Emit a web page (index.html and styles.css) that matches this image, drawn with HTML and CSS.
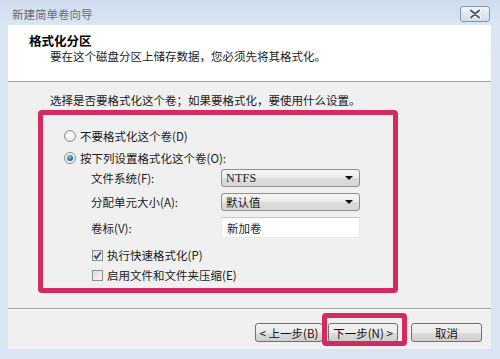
FILE: index.html
```html
<!DOCTYPE html>
<html lang="zh-CN">
<head>
    <meta charset="UTF-8">
    <meta name="viewport" content="width=device-width, initial-scale=1.0">
    <title>新建简单卷向导</title>
    <link rel="stylesheet" href="styles.css">
</head>
<body>
    <div class="window">
        <div class="titlebar">
            <span class="caption">新建简单卷向导</span>
            <span class="close-btn">
                <svg width="14" height="10" viewBox="0 0 14 10">
                    <path d="M3 1.5 L11 8.5 M11 1.5 L3 8.5" stroke="#ffffff" stroke-width="4" stroke-linecap="round"/>
                    <path d="M3 1.5 L11 8.5 M11 1.5 L3 8.5" stroke="#4f5a68" stroke-width="2" stroke-linecap="round"/>
                </svg>
            </span>
        </div>

        <div class="page">
            <div class="header">
                <div class="header-title">格式化分区</div>
                <div class="header-sub">要在这个磁盘分区上储存数据，您必须先将其格式化。</div>
            </div>

            <div class="content">
                <p class="intro">选择是否要格式化这个卷；如果要格式化，要使用什么设置。</p>

                <div class="mark-box">
                    <div class="option"><span class="radio"></span>不要格式化这个卷(D)</div>
                    <div class="option"><span class="radio checked"></span>按下列设置格式化这个卷(O):</div>

                    <div class="fields">
                        <label>文件系统(F):</label>
                        <div class="combo"><span class="latin">NTFS</span><span class="arrow"></span></div>
                        <label>分配单元大小(A):</label>
                        <div class="combo">默认值<span class="arrow"></span></div>
                        <label>卷标(V):</label>
                        <div class="textbox">新加卷</div>
                    </div>

                    <div class="check-row">
                        <span class="checkbox">
                            <svg width="9" height="9" viewBox="0 0 9 9">
                                <path d="M1.2 4.6 L3.5 7.2 L7.8 1.2" fill="none" stroke="#2b4f8f" stroke-width="1.8"/>
                            </svg>
                        </span>执行快速格式化(P)
                    </div>
                    <div class="check-row"><span class="checkbox"></span>启用文件和文件夹压缩(E)</div>
                </div>
            </div>

            <div class="buttons">
                <button class="btn">&lt; 上一步(B)</button>
                <span class="next-wrap">
                    <button class="btn next">下一步(N) &gt;</button>
                    <span class="mark-ring"></span>
                </span>
                <button class="btn cancel">取消</button>
            </div>
        </div>
    </div>
</body>
</html>
```

FILE: styles.css
```css
body {
    margin: 0;
    width: 500px;
    height: 359px;
    overflow: hidden;
    font-family: "Noto Sans CJK SC", "Liberation Sans", sans-serif;
    font-size: 11.5px;
    color: #1a1a1a;
    background: linear-gradient(#cfdcee 0, #dbe6f3 26px, #dae5f3 100%);
}
.window {
    height: 359px;
    display: flex;
    flex-direction: column;
}
.titlebar {
    height: 25px;
    padding: 0 10px 0 12px;
    display: flex;
    align-items: center;
    justify-content: space-between;
    box-sizing: border-box;
}
.caption {
    color: #666d76;
    line-height: 14px;
    margin-top: 3px;
}
.close-btn {
    width: 30px;
    height: 16px;
    margin-top: 3px;
    box-sizing: border-box;
    border: 1px solid #8596ad;
    border-radius: 3px;
    background: linear-gradient(#f3f6fa, #dfe7f1 50%, #d3deeb);
    display: flex;
    align-items: center;
    justify-content: center;
}
.page {
    margin: 0 9px 0 8px;
    background: #f0f0f0;
}
.header {
    height: 57px;
    box-sizing: border-box;
    padding: 9px 0 0 21px;
    background: #fff;
    border-bottom: 1px solid #a0a0a0;
}
.header-title {
    font-weight: bold;
    font-size: 12.5px;
    line-height: 14px;
    color: #000;
}
.header-sub {
    margin-top: 1px;
    padding-left: 21px;
    line-height: 14px;
}
.content {
    height: 227px;
    box-sizing: border-box;
    padding-top: 11px;
    border-bottom: 1px solid #a0a0a0;
}
.intro {
    margin: 0 0 3px 42px;
    line-height: 14px;
}
.mark-box {
    margin-left: 30px;
    width: 360px;
    height: 183px;
    box-sizing: border-box;
    border: 5px solid #d42a62;
    border-radius: 4px;
    padding-top: 10px;
}
.option {
    height: 22px;
    padding-left: 21px;
    display: flex;
    align-items: center;
}
.radio {
    width: 12px;
    height: 12px;
    box-sizing: border-box;
    border: 1px solid #8e8f8f;
    border-radius: 50%;
    background: radial-gradient(circle at 50% 40%, #ffffff, #e2e2e2);
    margin-right: 4px;
    display: flex;
    align-items: center;
    justify-content: center;
}
.radio.checked::after {
    content: "";
    width: 6px;
    height: 6px;
    border-radius: 50%;
    background: radial-gradient(circle at 40% 35%, #8fd0ea, #22739a 55%, #0d3f5c);
}
.fields {
    margin-left: 48px;
    display: grid;
    grid-template-columns: 130px 139px;
    grid-template-rows: 18px 18px 21px;
    row-gap: 6px;
    align-items: center;
}
.combo {
    height: 18px;
    box-sizing: border-box;
    border: 1px solid #8e8f8f;
    border-radius: 3px;
    background: linear-gradient(#f4f4f4, #ebebeb 50%, #dcdcdc 51%, #d6d6d6);
    padding-left: 4px;
    display: flex;
    align-items: center;
    justify-content: space-between;
    line-height: 14px;
}
.latin {
    font-family: "Liberation Serif", serif;
    font-size: 12px;
    letter-spacing: 0.3px;
}
.arrow {
    width: 0;
    height: 0;
    margin-right: 6px;
    border-left: 4px solid transparent;
    border-right: 4px solid transparent;
    border-top: 4px solid #111;
}
.textbox {
    height: 21px;
    box-sizing: border-box;
    background: #fff;
    border: 1px solid #e3e9ef;
    border-top-color: #c6c9ce;
    padding-left: 5px;
    display: flex;
    align-items: center;
}
.check-row {
    height: 20px;
    padding-left: 49px;
    display: flex;
    align-items: center;
}
.fields + .check-row {
    margin-top: 7px;
}
.checkbox {
    width: 11px;
    height: 11px;
    box-sizing: border-box;
    border: 1px solid #8f8f8f;
    background: linear-gradient(135deg, #dcdcdc, #f6f6f6);
    margin-right: 4px;
    display: flex;
    align-items: center;
    justify-content: center;
}
.buttons {
    height: 40px;
    box-sizing: border-box;
    border-top: 1px solid #fff;
    padding: 13px 9px 0 0;
    display: flex;
    justify-content: flex-end;
    align-items: flex-start;
}
.btn {
    height: 19px;
    box-sizing: border-box;
    border: 1px solid #707070;
    border-radius: 3px;
    background: linear-gradient(#f2f2f2, #ebebeb 50%, #dddddd 51%, #cfcfcf);
    font-family: inherit;
    font-size: 11.5px;
    color: #111;
    padding: 0;
    line-height: 16px;
    width: 68px;
}
.next-wrap {
    position: relative;
    margin-left: 5px;
}
.next {
    width: 70px;
    display: block;
}
.mark-ring {
    position: absolute;
    left: -6px;
    top: -10px;
    width: 85px;
    height: 33px;
    box-sizing: border-box;
    border: 5px solid #d42a62;
    border-radius: 4px;
    pointer-events: none;
}
.cancel {
    width: 71px;
    margin-left: 13px;
}
```
